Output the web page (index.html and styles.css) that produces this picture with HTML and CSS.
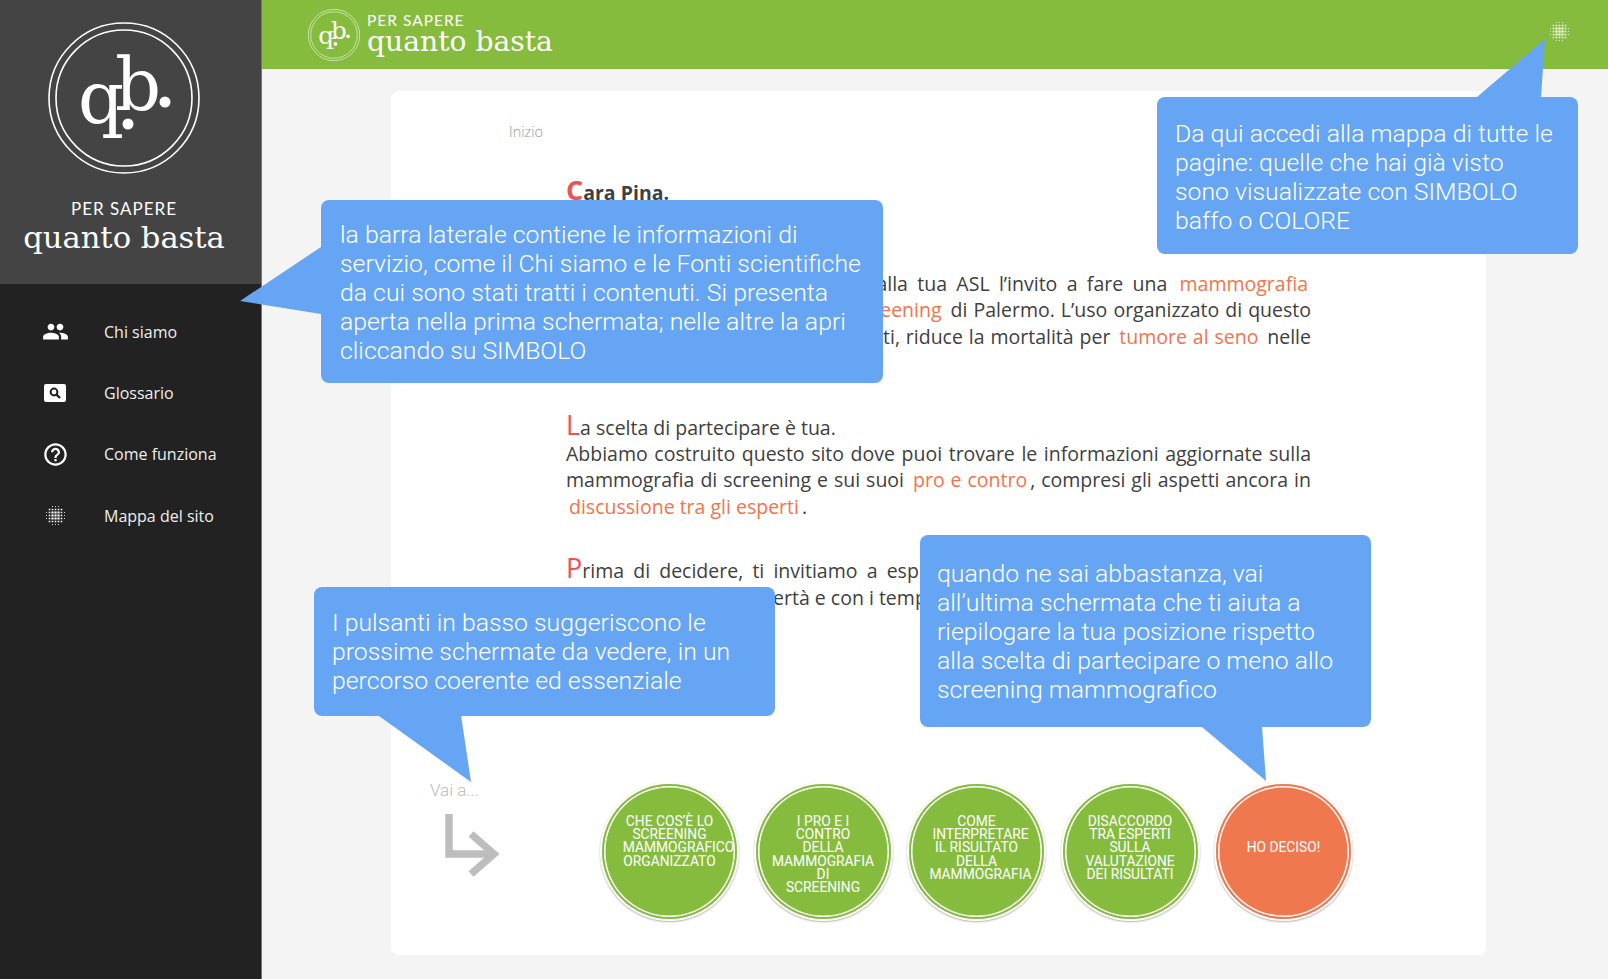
FILE: index.html
```html
<!doctype html>
<html lang="it">
	<head>
		<meta charset="UTF-8" />
		<title>Per sapere quanto basta</title>
		<link rel="stylesheet" href="styles.css">
	</head>
	<body>
		<svg class="defs" width="0" height="0">
			<symbol id="logo" viewBox="0 0 152 152">
				<circle cx="76" cy="76" r="75" fill="none" stroke="#fff" stroke-width="1.6" />
				<circle cx="76" cy="76" r="68" fill="none" stroke="#fff" stroke-width="1.6" />
				<text class="logo-letter" x="30" y="101">q</text>
				<text class="logo-letter" x="67" y="88">b</text>
				<circle cx="80" cy="102" r="5.5" fill="#fff" />
				<circle cx="117" cy="80" r="5.5" fill="#fff" />
			</symbol>
			<symbol id="dots" viewBox="0 0 21 21">
				<g fill="none" stroke="#fff">
					<path stroke-width="2.2" stroke-dasharray="2.2 0.8" d="M6.4 7.5H14.6M6.4 10.5H14.6M6.4 13.5H14.6" />
					<path stroke-width="1.6" stroke-dasharray="1.6 1.4" d="M3.7 4.5H17.3M3.7 16.5H17.3M4.5 6.7V14.3M16.5 6.7V14.3" />
					<path stroke-width="1" stroke-dasharray="1 2" opacity="0.8" d="M7 1.5H14M7 19.5H14M1.5 7V14M19.5 7V14" />
				</g>
			</symbol>
		</svg>

		<div class="app">
			<aside class="sidebar">
				<div class="brand">
					<svg class="brand-logo"><use href="#logo" /></svg>
					<div class="brand-small">PER SAPERE</div>
					<div class="brand-big">quanto basta</div>
				</div>
				<nav class="nav">
					<a class="nav-item">
						<span class="nav-icon">
							<svg width="27" height="27" viewBox="0 0 24 24" fill="#fff"><path d="M16 11c1.66 0 2.99-1.34 2.99-3S17.66 5 16 5c-1.66 0-3 1.34-3 3s1.34 3 3 3zm-8 0c1.66 0 2.99-1.34 2.99-3S9.66 5 8 5C6.34 5 5 6.34 5 8s1.34 3 3 3zm0 2c-2.33 0-7 1.17-7 3.5V19h14v-2.5c0-2.33-4.67-3.5-7-3.5zm8 0c-.29 0-.62.02-.97.05 1.16.84 1.97 1.97 1.97 3.45V19h6v-2.5c0-2.33-4.67-3.5-7-3.5z" /></svg>
						</span>
						Chi siamo
					</a>
					<a class="nav-item">
						<span class="nav-icon">
							<svg width="22" height="18" viewBox="0 0 22 18"><rect width="22" height="18" rx="2" fill="#fff" /><circle cx="10" cy="8" r="3.4" fill="none" stroke="#222" stroke-width="2" /><path d="M12.6 10.6L16 14" stroke="#222" stroke-width="2.4" /></svg>
						</span>
						Glossario
					</a>
					<a class="nav-item">
						<span class="nav-icon">
							<svg width="27" height="27" viewBox="0 0 24 24" fill="#fff"><path d="M11 18h2v-2h-2v2zm1-16C6.48 2 2 6.48 2 12s4.48 10 10 10 10-4.48 10-10S17.52 2 12 2zm0 18c-4.41 0-8-3.59-8-8s3.59-8 8-8 8 3.59 8 8-3.59 8-8 8zm0-14c-2.21 0-4 1.79-4 4h2c0-1.1.9-2 2-2s2 .9 2 2c0 2-3 1.75-3 5h2c0-2.25 3-2.5 3-5 0-2.21-1.79-4-4-4z" /></svg>
						</span>
						Come funziona
					</a>
					<a class="nav-item">
						<span class="nav-icon">
							<svg width="21" height="21"><use href="#dots" /></svg>
						</span>
						Mappa del sito
					</a>
				</nav>
			</aside>

			<div class="main">
				<header class="topbar">
					<div class="top-brand">
						<svg class="top-logo"><use href="#logo" /></svg>
						<div>
							<div class="top-small">PER SAPERE</div>
							<div class="top-big">quanto basta</div>
						</div>
					</div>
					<svg class="top-map" width="21" height="21"><use href="#dots" /></svg>
				</header>

				<div class="page">
					<section class="card">
						<div class="crumb">Inizio</div>
						<div class="letter">
							<p>
								<span class="line title"><span class="cap">C</span>ara Pina.</span>
								<span class="line">ecco un sito per tutti i tuoi dubbi.</span>
							</p>
							<p>
								<span class="line just">Hai ricevuto o riceverai presto dalla tua ASL l’invito a fare una <a class="link">mammografia</a></span>
								<span class="line just">gratuita nel tuo programma di <a class="link">screening</a> di Palermo. L’uso organizzato di questo</span>
								<span class="line just">esame, secondo gli studi più recenti, riduce la mortalità per <a class="link">tumore al seno</a> nelle</span>
								<span class="line">donne tra 50 e 69 anni.</span>
							</p>
							<p>
								<span class="line"><span class="cap">L</span>a scelta di partecipare è tua.</span>
								<span class="line just">Abbiamo costruito questo sito dove puoi trovare le informazioni aggiornate sulla</span>
								<span class="line just">mammografia di screening e sui suoi <a class="link">pro e contro</a>, compresi gli aspetti ancora in</span>
								<span class="line"><a class="link">discussione tra gli esperti</a>.</span>
							</p>
							<p>
								<span class="line just"><span class="cap">P</span>rima di decidere, ti invitiamo a esplorare con calma tutte le pagine del sito,</span>
								<span class="line">in ordine, con piena libertà e con i tempi che preferisci.</span>
							</p>
						</div>

						<div class="next">
							<div class="goto">
								<div class="goto-label">Vai a...</div>
								<svg width="54" height="66" viewBox="0 0 54 66" fill="none" stroke="#bdbdbd" stroke-width="7.5"><path d="M4 1V41H48" /><path d="M26 21L49 41L26 61" /></svg>
							</div>
							<div class="steps">
								<a class="step"><span>Che cos’è lo</span><span>screening</span><span class="nudge-big">mammografico</span><span>organizzato</span></a>
								<a class="step"><span>I pro e i</span><span>contro</span><span>della</span><span>mammografia</span><span>di</span><span>screening</span></a>
								<a class="step"><span>Come</span><span class="nudge">interpretare</span><span>il risultato</span><span>della</span><span class="nudge">mammografia</span></a>
								<a class="step"><span>Disaccordo</span><span>tra esperti</span><span>sulla</span><span>valutazione</span><span>dei risultati</span></a>
								<a class="step step-end"><span>Ho deciso!</span></a>
							</div>
						</div>
					</section>
				</div>
			</div>

			<div class="note note-side">la barra laterale contiene le informazioni di servizio, come il Chi siamo e le Fonti scientifiche da cui sono stati tratti i contenuti. Si presenta aperta nella prima schermata; nelle altre la apri cliccando su SIMBOLO</div>
			<div class="note note-map">Da qui accedi alla mappa di tutte le pagine: quelle che hai già visto sono visualizzate con SIMBOLO baffo o COLORE</div>
			<div class="note note-buttons">I pulsanti in basso suggeriscono le prossime schermate da vedere, in un percorso coerente ed essenziale</div>
			<div class="note note-last">quando ne sai abbastanza, vai all’ultima schermata che ti aiuta a riepilogare la tua posizione rispetto alla scelta di partecipare o meno allo screening mammografico</div>
		</div>
	</body>
</html>
```

FILE: styles.css
```css
* {
	box-sizing: border-box;
}
body {
	margin: 0;
	height: 979px;
	overflow: hidden;
	background-color: #f4f4f4;
	font-family: "Open Sans", sans-serif;
}
.defs {
	position: absolute;
}
.logo-letter {
	font-family: "DejaVu Serif", serif;
	font-size: 72px;
	fill: #fff;
}
.app {
	position: relative;
	display: flex;
	height: 979px;
}

/* sidebar */
.sidebar {
	width: 262px;
	flex-shrink: 0;
	background-color: #222;
	border-right: 1px solid #777;
}
.brand {
	height: 284px;
	background-color: #444;
	display: flex;
	flex-direction: column;
	align-items: center;
	padding: 22px 13px 0 0;
	color: #fff;
}
.brand-logo {
	width: 152px;
	height: 152px;
}
.brand-small {
	font-family: Lato, sans-serif;
	font-size: 17px;
	letter-spacing: 1px;
	margin-top: 25px;
	line-height: 20px;
}
.brand-big {
	font-family: "DejaVu Serif", serif;
	font-size: 30.6px;
	line-height: 38px;
}
.nav {
	padding-top: 17px;
}
.nav-item {
	display: flex;
	align-items: center;
	height: 61.4px;
	color: #eee;
	font-size: 16px;
}
.nav-icon {
	width: 28px;
	margin-left: 41px;
	margin-right: 35px;
	display: flex;
	justify-content: center;
}

/* top bar */
.main {
	flex: 1;
	display: flex;
	flex-direction: column;
}
.topbar {
	height: 69px;
	background-color: #86bc3e;
	display: flex;
	justify-content: space-between;
	align-items: center;
	padding: 0 38px 5px 46px;
	color: #fff;
}
.top-brand {
	display: flex;
	align-items: center;
	gap: 7px;
}
.top-logo {
	width: 52px;
	height: 52px;
	margin-top: 5px;
}
.top-small {
	font-family: Lato, sans-serif;
	font-size: 15.5px;
	letter-spacing: 1px;
	line-height: 19px;
	margin-top: 1px;
}
.top-big {
	font-family: "DejaVu Serif", serif;
	font-size: 28.2px;
	line-height: 24px;
}
.top-map {
	margin-top: -1px;
}

/* white card */
.page {
	flex: 1;
	padding: 22px 0 24px 129px;
}
.card {
	width: 1095px;
	height: 100%;
	background-color: #fff;
	border-radius: 8px;
	display: flex;
	flex-direction: column;
	padding: 31px 0 36px;
}
.crumb {
	margin-left: 118px;
	font-size: 14.5px;
	font-weight: 300;
	line-height: 20px;
	color: #999;
}
.letter {
	margin: 38px 0 0 175px;
	width: 745px;
	font-size: 19.5px;
	line-height: 26.3px;
	color: #404040;
}
.letter p {
	margin: 0 0 38.5px;
}
.line {
	display: block;
}
.just {
	text-align: justify;
	text-align-last: justify;
}
.title {
	font-weight: 700;
}
.cap {
	font-size: 27px;
	line-height: 0;
	color: #ef5350;
}
.link {
	color: #f4734a;
	padding: 0 3px;
}

/* bottom buttons */
.next {
	margin-top: auto;
	display: flex;
}
.goto {
	width: 172px;
	margin-left: 39px;
	margin-top: -6px;
}
.goto-label {
	font-family: Roboto, sans-serif;
	font-weight: 300;
	font-size: 17px;
	line-height: 24px;
	color: #bbb;
	margin-bottom: 11px;
}
.goto svg {
	margin-left: 15px;
	display: block;
}
.steps {
	display: flex;
	gap: 18.5px;
}
.step {
	width: 135px;
	height: 135px;
	border-radius: 50%;
	background-color: #86bc3e;
	box-shadow: inset 0 0 0 2px #86bc3e, inset 0 0 0 3.5px #fff, 0 0 0 2px #fff, 0 1px 2px 2px rgba(0, 0, 0, 0.3);
	padding-top: 31px;
	display: flex;
	flex-direction: column;
	align-items: center;
	font-family: Roboto, sans-serif;
	font-weight: 400;
	font-size: 13.8px;
	line-height: 13.2px;
	text-transform: uppercase;
	color: #fff;
}
.step span {
	white-space: nowrap;
}
.step-end {
	background-color: #f0784f;
	box-shadow: inset 0 0 0 2px #f0784f, inset 0 0 0 3.5px #fff, 0 0 0 2px #fff, 0 1px 2px 2px rgba(0, 0, 0, 0.3);
	padding-top: 57px;
}
.nudge {
	padding-left: 8px;
}
.nudge-big {
	padding-left: 18px;
}

/* blue callouts over the page */
.note {
	position: absolute;
	background-color: #66a5f4;
	border-radius: 8px;
	color: #fff;
	font-family: Roboto, sans-serif;
	font-weight: 300;
	font-size: 24.8px;
	line-height: 29px;
}
.note::after {
	content: "";
	position: absolute;
	background-color: #66a5f4;
}
.note-side {
	left: 321px;
	top: 200px;
	width: 562px;
	height: 183px;
	padding: 20px 18px 0 19px;
}
.note-side::after {
	left: -81px;
	top: 47px;
	width: 82px;
	height: 67px;
	clip-path: polygon(0 54px, 81px 0, 82px 0, 82px 67px, 81px 67px);
}
.note-map {
	left: 1157px;
	top: 97px;
	width: 421px;
	height: 157px;
	padding: 22px 19px 0 18px;
}
.note-map::after {
	left: 320px;
	top: -58px;
	width: 68px;
	height: 59px;
	clip-path: polygon(68px 0, 64px 58px, 64px 59px, 0 59px, 0 58px);
}
.note-buttons {
	left: 314px;
	top: 587px;
	width: 461px;
	height: 129px;
	padding: 21px 19px 0 18px;
}
.note-buttons::after {
	left: 65px;
	top: 128px;
	width: 92px;
	height: 67px;
	clip-path: polygon(0 0, 82px 0, 92px 67px, 0 1px);
}
.note-last {
	left: 920px;
	top: 535px;
	width: 451px;
	height: 192px;
	padding: 24px 30px 0 17px;
}
.note-last::after {
	left: 282px;
	top: 191px;
	width: 64px;
	height: 55px;
	clip-path: polygon(0 0, 60px 0, 64px 55px, 0 1px);
}
```
